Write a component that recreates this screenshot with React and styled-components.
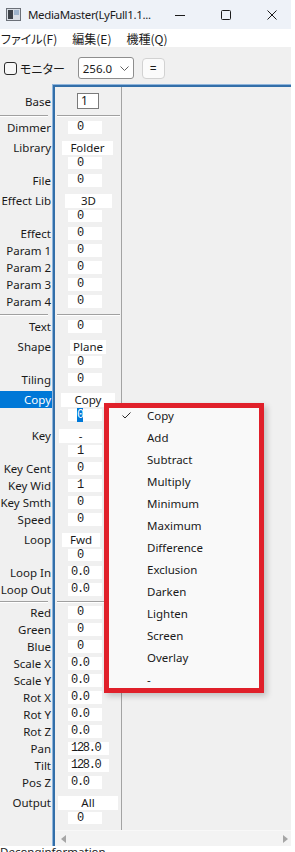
import React from "react";
import styled, { createGlobalStyle, css } from "styled-components";

const UI = `"Noto Sans", "Noto Sans CJK JP", sans-serif`;
const JP = `"Noto Sans CJK JP", sans-serif`;
const MONO = `"Liberation Mono", "DejaVu Sans Mono", monospace`;

const GlobalStyle = createGlobalStyle`
  html, body { margin: 0; padding: 0; background: #ffffff; overflow: hidden; }
  body { font-family: ${UI}; }
`;

const Window = styled.div`
  position: relative;
  width: 291px;
  display: flex;
  flex-direction: column;
  background: #f0f0f0;
  font-family: ${UI};
  font-size: 11.5px;
  color: #1a1a1a;
  overflow: hidden;
`;

/* ---------- title bar ---------- */
const TitleBar = styled.div`
  height: 29px;
  flex-shrink: 0;
  display: flex;
  align-items: center;
  background: #eef2f8;
`;
const AppIcon = styled.svg`
  margin-left: 6px;
  flex-shrink: 0;
`;
const Title = styled.div`
  margin-left: 7px;
  flex: 1;
  min-width: 0;
  white-space: nowrap;
  overflow: hidden;
  color: #1b1b1b;
  font-size: 11.5px;
  letter-spacing: -0.35px;
`;
const CaptionButton = styled.div`
  width: 46px;
  height: 29px;
  flex-shrink: 0;
  display: flex;
  align-items: center;
  justify-content: center;
  margin-right: ${(p) => p.$overhang || 0}px;
`;

/* ---------- menu bar ---------- */
const MenuBar = styled.div`
  height: 18px;
  flex-shrink: 0;
  display: flex;
  align-items: center;
  gap: 15px;
  padding-left: 1px;
  background: #ffffff;
  font-family: ${JP};
  font-feature-settings: "palt";
  font-size: 12px;
  color: #1b1b1b;
`;
const MenuTitle = styled.span`
  white-space: nowrap;
`;

/* ---------- toolbar ---------- */
const Toolbar = styled.div`
  height: 37px;
  box-sizing: border-box;
  flex-shrink: 0;
  display: flex;
  align-items: center;
  padding: 10px 0 5px 4px;
`;
const CheckBox = styled.span`
  width: 13px;
  height: 13px;
  box-sizing: border-box;
  border: 1px solid #2b2b2b;
  border-radius: 3px;
  background: #f7f7f7;
  flex-shrink: 0;
`;
const CheckLabel = styled.span`
  margin-left: 3px;
  font-family: ${JP};
  font-feature-settings: "palt";
  font-size: 12px;
  color: #1b1b1b;
`;
const Dropdown = styled.div`
  margin-left: 13px;
  width: 56px;
  height: 22px;
  box-sizing: border-box;
  border: 1px solid #8e8e8e;
  border-radius: 3px;
  background: #ffffff;
  display: flex;
  align-items: center;
  justify-content: space-between;
  padding: 0 4px 0 4px;
  font-size: 11.5px;
  color: #1b1b1b;
`;
const PushButton = styled.div`
  margin-left: 8px;
  width: 23px;
  height: 21px;
  box-sizing: border-box;
  border: 1px solid #d2d2d2;
  border-radius: 4px;
  background: #fbfbfb;
  display: flex;
  align-items: center;
  justify-content: center;
  font-size: 12px;
  color: #1b1b1b;
`;

/* ---------- main panel ---------- */
const Main = styled.div`
  display: flex;
  flex-shrink: 0;
`;
const LabelColumn = styled.div`
  width: 52px;
  flex-shrink: 0;
  padding-top: 3px;
  display: flex;
  flex-direction: column;
  overflow: hidden;
`;
const Frame = styled.div`
  flex: 1;
  min-width: 0;
  display: flex;
  flex-direction: column;
  border-top: 1px solid #8fb5dc;
  border-left: 1px solid #8fb5dc;
  box-shadow: inset 2px 2px 0 #336fa9;
  padding: 2px 0 0 2px;
`;
const ValueArea = styled.div`
  display: flex;
`;
const ValueColumn = styled.div`
  width: 67px;
  box-sizing: border-box;
  border-right: 1px solid #a3a3a3;
  padding-bottom: 3px;
  display: flex;
  flex-direction: column;
`;

const rowHeights = { base: 24, num: 17, combo: 36 };

const LabelCell = styled.div`
  height: ${(p) => rowHeights[p.$kind]}px;
  box-sizing: border-box;
  padding-top: ${(p) => (p.$kind === "base" ? 6 : p.$kind === "combo" ? 3 : 0)}px;
  flex-shrink: 0;
`;
const LabelText = styled.div`
  height: 17px;
  line-height: 17px;
  width: 52px;
  box-sizing: border-box;
  padding-right: 1px;
  text-align: right;
  white-space: nowrap;
  overflow: hidden;
  font-size: 11.5px;
  ${(p) =>
    p.$active &&
    css`
      background: #0078d7;
      color: #ffffff;
    `}
`;

const Separator = styled.div`
  height: ${(p) => p.$h}px;
  flex-shrink: 0;
  box-sizing: border-box;
  padding-top: ${(p) => p.$h / 2}px;
  padding-left: ${(p) => p.$inset || 0}px;
  padding-right: ${(p) => p.$outset || 0}px;
  &::before {
    content: "";
    display: block;
    border-top: 1px solid #a0a0a0;
    border-bottom: 1px solid #ffffff;
  }
`;

const ValueCell = styled.div`
  height: ${(p) => rowHeights[p.$kind]}px;
  box-sizing: border-box;
  flex-shrink: 0;
  display: flex;
  flex-direction: column;
  padding-top: ${(p) => (p.$kind === "base" ? 6 : p.$kind === "combo" ? 3 : 0)}px;
`;
const Line = styled.div`
  height: ${(p) => p.$h}px;
  display: flex;
  align-items: center;
`;
const EditBox = styled.div`
  margin-left: 22px;
  width: 22px;
  height: 16px;
  box-sizing: border-box;
  border: 1px solid #7a7a7a;
  background: #ffffff;
  padding-left: 3px;
  line-height: 14px;
  font-size: 12px;
`;
const NumBox = styled.div`
  margin-left: 13px;
  min-width: 34px;
  height: ${(p) => p.$h || 13}px;
  box-sizing: border-box;
  background: #ffffff;
  padding: 0 8px 0 ${(p) => (p.$float ? 3 : 9)}px;
  font-family: ${MONO};
  font-size: 12px;
  letter-spacing: -1.3px;
  line-height: ${(p) => p.$h || 13}px;
  color: #1a1a1a;
  white-space: nowrap;
`;
const Selected = styled.span`
  background: #0078d7;
  color: #ffffff;
`;
const ComboBox = styled.div`
  margin-left: ${(p) => p.$x}px;
  width: ${(p) => p.$w}px;
  height: 14px;
  background: #ffffff;
  text-align: center;
  line-height: 14px;
  font-size: 11.5px;
  white-space: nowrap;
`;

const ScrollBar = styled.div`
  height: 16px;
  box-sizing: border-box;
  border-top: 1px solid #f8f8f8;
  background: #f3f3f3;
  display: flex;
  align-items: center;
  justify-content: space-between;
  padding: 0 3px 0 6px;
`;

const StatusText = styled.div`
  height: 14px;
  line-height: 12px;
  background: #ffffff;
  font-size: 11.5px;
  color: #1b1b1b;
  white-space: nowrap;
`;

/* ---------- popup menu ---------- */
const Popup = styled.ul`
  position: absolute;
  left: 104px;
  top: 403px;
  width: 160px;
  height: 290px;
  box-sizing: border-box;
  margin: 0;
  padding: 1px 0 0;
  list-style: none;
  background: #f9f9f9;
  outline: 5px solid #e0202a;
  outline-offset: -5px;
  box-shadow: 3px 3px 6px rgba(0, 0, 0, 0.2);
`;
const PopupItem = styled.li`
  height: 22px;
  display: grid;
  grid-template-columns: 43px 1fr;
  align-items: center;
  font-size: 11.5px;
  color: #1a1a1a;
`;
const CheckSlot = styled.span`
  padding-left: 18px;
  display: flex;
  align-items: center;
`;

const ROWS = [
  { kind: "base", label: "Base", value: "1" },
  { kind: "sep", h: 8 },
  { kind: "num", label: "Dimmer", value: "0" },
  { kind: "combo", label: "Library", value: "Folder", x: 7, w: 51, sub: "0" },
  { kind: "num", label: "File", value: "0" },
  { kind: "combo", label: "Effect Lib", value: "3D", x: 10, w: 47, sub: "0" },
  { kind: "num", label: "Effect", value: "0" },
  { kind: "num", label: "Param 1", value: "0" },
  { kind: "num", label: "Param 2", value: "0" },
  { kind: "num", label: "Param 3", value: "0" },
  { kind: "num", label: "Param 4", value: "0" },
  { kind: "sep", h: 8 },
  { kind: "num", label: "Text", value: "0" },
  { kind: "combo", label: "Shape", value: "Plane", x: 15, w: 36, sub: "0" },
  { kind: "num", label: "Tiling", value: "0" },
  { kind: "combo", label: "Copy", value: "Copy", x: 6, w: 54, sub: "0", active: true },
  { kind: "combo", label: "Key", value: "-", x: 4, w: 43, sub: "1" },
  { kind: "num", label: "Key Cent", value: "0" },
  { kind: "num", label: "Key Wid", value: "1" },
  { kind: "num", label: "Key Smth", value: "0" },
  { kind: "num", label: "Speed", value: "0" },
  { kind: "combo", label: "Loop", value: "Fwd", x: 7, w: 38, sub: "0" },
  { kind: "num", label: "Loop In", value: "0.0", float: true },
  { kind: "num", label: "Loop Out", value: "0.0", float: true },
  { kind: "sep", h: 6 },
  { kind: "num", label: "Red", value: "0" },
  { kind: "num", label: "Green", value: "0" },
  { kind: "num", label: "Blue", value: "0" },
  { kind: "num", label: "Scale X", value: "0.0", float: true },
  { kind: "num", label: "Scale Y", value: "0.0", float: true },
  { kind: "num", label: "Rot X", value: "0.0", float: true },
  { kind: "num", label: "Rot Y", value: "0.0", float: true },
  { kind: "num", label: "Rot Z", value: "0.0", float: true },
  { kind: "num", label: "Pan", value: "128.0", float: true },
  { kind: "num", label: "Tilt", value: "128.0", float: true },
  { kind: "num", label: "Pos Z", value: "0.0", float: true },
  { kind: "combo", label: "Output", value: "All", x: 3, w: 60, sub: "0" },
];

const BLEND_MODES = [
  "Copy",
  "Add",
  "Subtract",
  "Multiply",
  "Minimum",
  "Maximum",
  "Difference",
  "Exclusion",
  "Darken",
  "Lighten",
  "Screen",
  "Overlay",
  "-",
];

function Label({ row }) {
  if (row.kind === "sep") return <Separator $h={row.h} $outset={4} />;
  return (
    <LabelCell $kind={row.kind}>
      <LabelText $active={row.active}>{row.label}</LabelText>
    </LabelCell>
  );
}

function Value({ row }) {
  if (row.kind === "sep") return <Separator $h={row.h} $inset={2} $outset={1} />;
  if (row.kind === "base")
    return (
      <ValueCell $kind="base">
        <Line $h={16}>
          <EditBox>{row.value}</EditBox>
        </Line>
      </ValueCell>
    );
  if (row.kind === "combo")
    return (
      <ValueCell $kind="combo">
        <Line $h={17}>
          <ComboBox $x={row.x} $w={row.w}>
            {row.value}
          </ComboBox>
        </Line>
        <Line $h={13}>
          <NumBox $h={12}>
            {row.active ? <Selected>{row.sub}</Selected> : row.sub}
          </NumBox>
        </Line>
      </ValueCell>
    );
  return (
    <ValueCell $kind="num">
      <Line $h={17}>
        <NumBox $float={row.float}>{row.value}</NumBox>
      </Line>
    </ValueCell>
  );
}

export default function App() {
  return (
    <>
      <GlobalStyle />
      <Window>
        <TitleBar>
          <AppIcon width="15" height="13" viewBox="0 0 15 13">
            <rect x="0.5" y="0.5" width="14" height="12" fill="#d9dee5" stroke="#6b7078" />
            <rect x="2" y="2" width="5" height="9" fill="#3d4249" />
            <rect x="8" y="2" width="5" height="5" fill="#9fb4cc" />
          </AppIcon>
          <Title>MediaMaster(LyFull1.1...</Title>
          <CaptionButton>
            <svg width="10" height="10" viewBox="0 0 10 10">
              <line x1="0" y1="5.5" x2="10" y2="5.5" stroke="#1b1b1b" strokeWidth="1" />
            </svg>
          </CaptionButton>
          <CaptionButton>
            <svg width="10" height="10" viewBox="0 0 10 10">
              <rect x="0.5" y="0.5" width="9" height="9" rx="1" fill="none" stroke="#1b1b1b" strokeWidth="1" />
            </svg>
          </CaptionButton>
          <CaptionButton $overhang={-4}>
            <svg width="10" height="10" viewBox="0 0 10 10">
              <path d="M0.5 0.5 L9.5 9.5 M9.5 0.5 L0.5 9.5" stroke="#1b1b1b" strokeWidth="1" />
            </svg>
          </CaptionButton>
        </TitleBar>

        <MenuBar>
          <MenuTitle>ファイル(F)</MenuTitle>
          <MenuTitle>編集(E)</MenuTitle>
          <MenuTitle>機種(Q)</MenuTitle>
        </MenuBar>

        <Toolbar>
          <CheckBox />
          <CheckLabel>モニター</CheckLabel>
          <Dropdown>
            <span>256.0</span>
            <svg width="9" height="5" viewBox="0 0 9 5">
              <path d="M0.5 0.5 L4.5 4.5 L8.5 0.5" fill="none" stroke="#5f5f5f" strokeWidth="1" />
            </svg>
          </Dropdown>
          <PushButton>=</PushButton>
        </Toolbar>

        <Main>
          <LabelColumn>
            {ROWS.map((row, i) => (
              <Label key={i} row={row} />
            ))}
          </LabelColumn>
          <Frame>
            <ValueArea>
              <ValueColumn>
                {ROWS.map((row, i) => (
                  <Value key={i} row={row} />
                ))}
              </ValueColumn>
            </ValueArea>
            <ScrollBar>
              <svg width="5" height="8" viewBox="0 0 5 8">
                <path d="M5 0 L0 4 L5 8 Z" fill="#a6a6a6" />
              </svg>
              <svg width="5" height="8" viewBox="0 0 5 8">
                <path d="M0 0 L5 4 L0 8 Z" fill="#a6a6a6" />
              </svg>
            </ScrollBar>
          </Frame>
        </Main>
        <StatusText>Deconginformation</StatusText>

        <Popup>
          {BLEND_MODES.map((m, i) => (
            <PopupItem key={m}>
              <CheckSlot>
                {i === 0 && (
                  <svg width="9" height="7" viewBox="0 0 9 7">
                    <path d="M0.5 3.5 L3 6 L8.5 0.5" fill="none" stroke="#2a2a2a" strokeWidth="1" />
                  </svg>
                )}
              </CheckSlot>
              <span>{m}</span>
            </PopupItem>
          ))}
        </Popup>
      </Window>
    </>
  );
}
